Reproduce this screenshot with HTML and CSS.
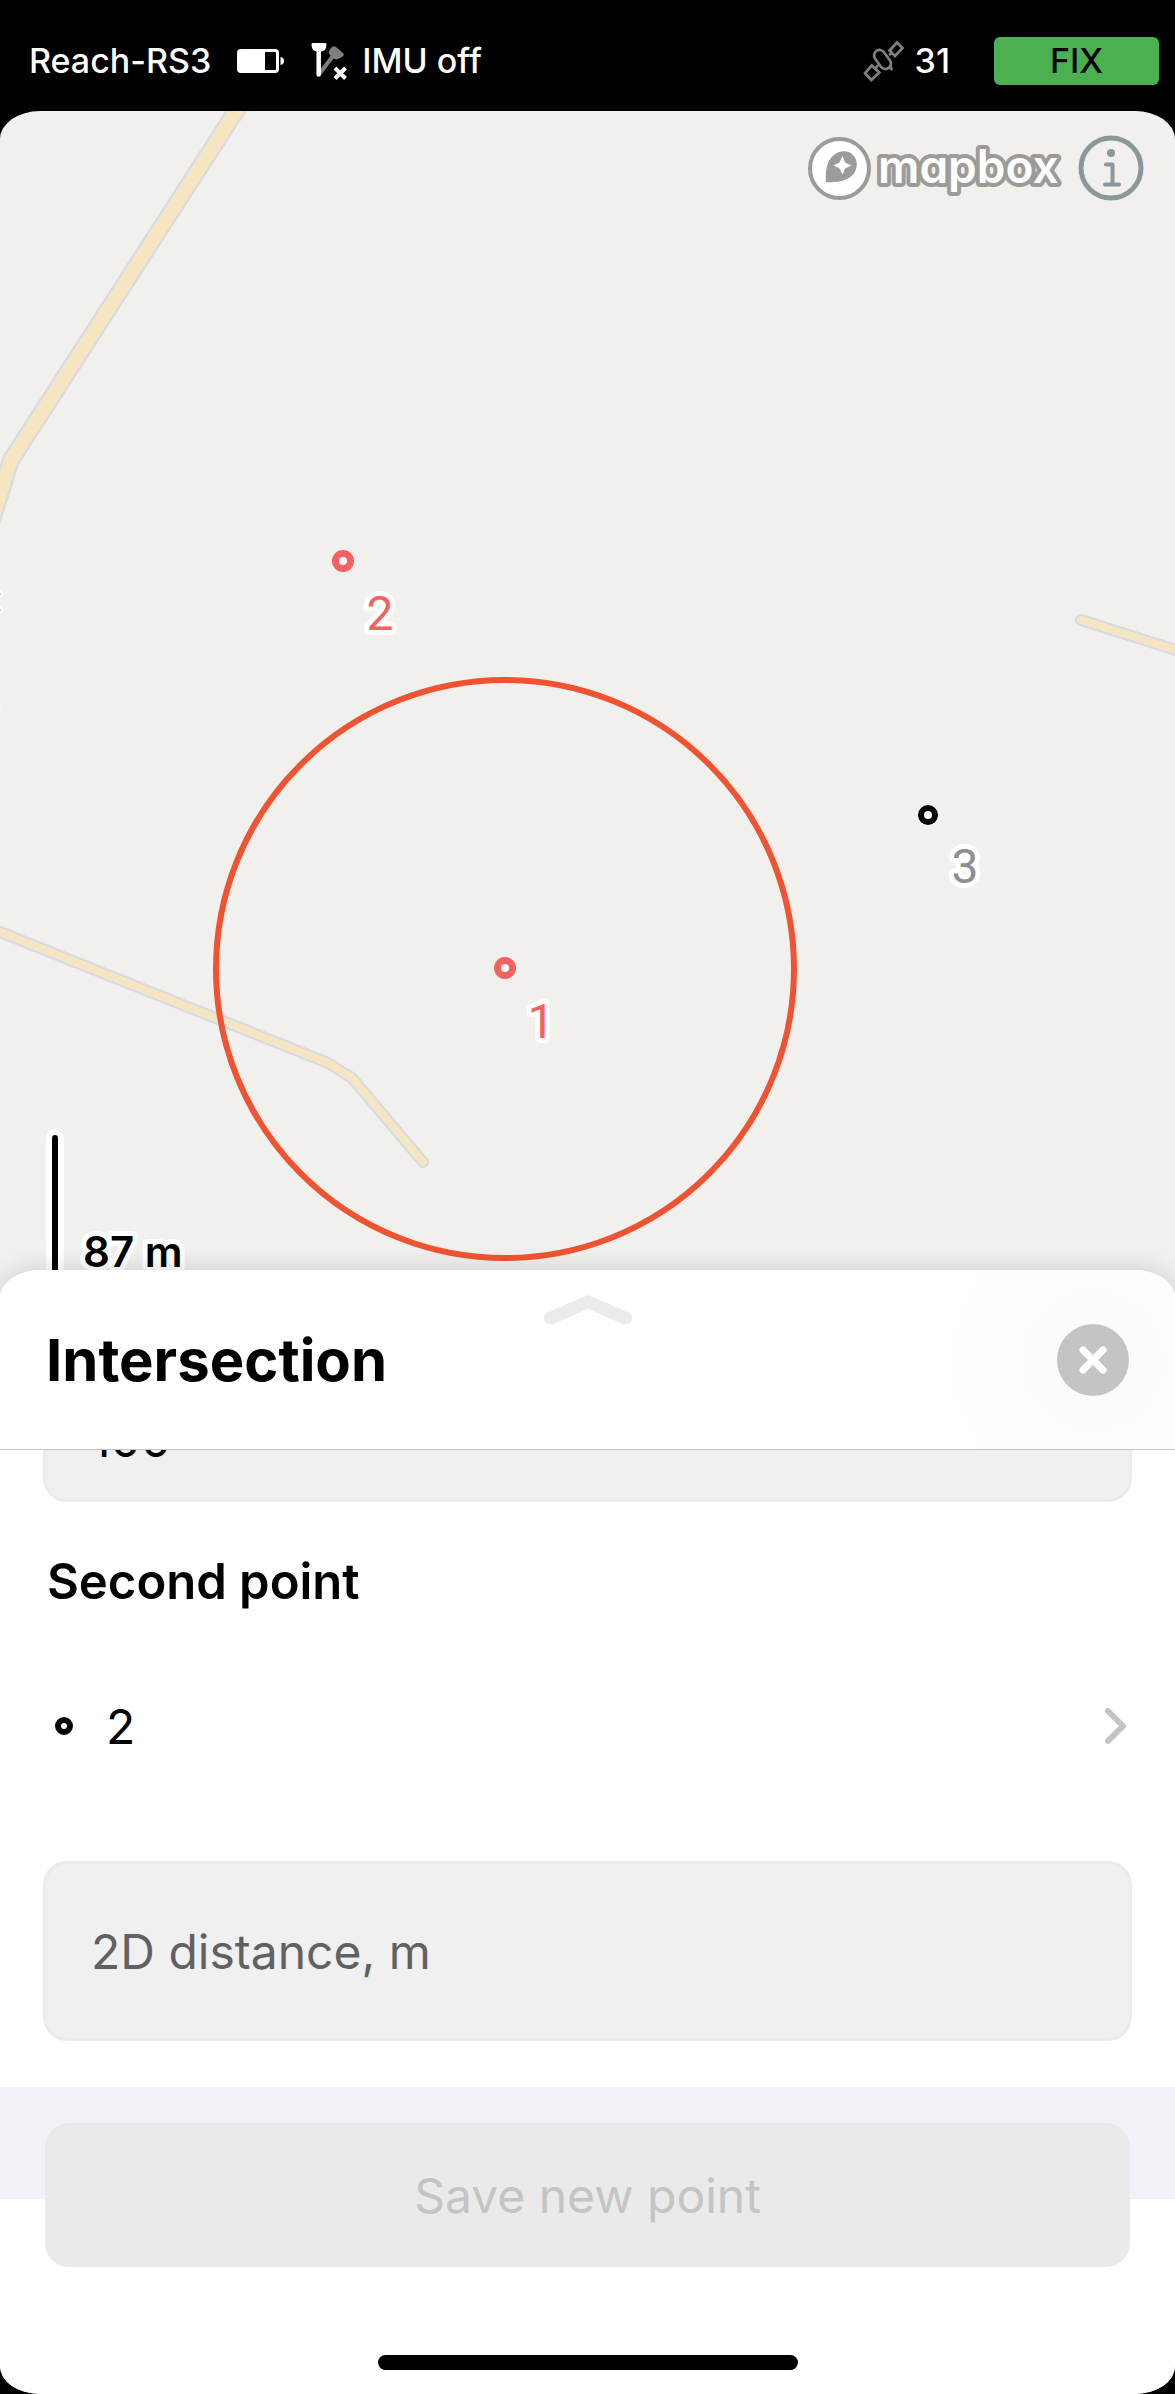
FILE: index.html
```html
<!DOCTYPE html>
<html lang="en">
<head>
<meta charset="utf-8">
<meta name="viewport" content="width=device-width, initial-scale=1">
<title>Intersection</title>
<link rel="stylesheet" href="styles.css">
</head>
<body>
<div class="screen">
  <header class="status">
    <span>Reach-RS3</span>
    <svg class="status-battery" width="47" height="24" viewBox="0 0 47 24" aria-hidden="true">
      <path fill="#fff" fill-rule="evenodd" d="M4 0H38a4 4 0 0 1 4 4V20a4 4 0 0 1-4 4H4a4 4 0 0 1-4-4V4a4 4 0 0 1 4-4ZM28 3V21H38a1 1 0 0 0 1-1V4a1 1 0 0 0-1-1Z"/>
      <path fill="#fff" d="M43.500 8Q47 8.500 47 12T43.500 16Z"/>
    </svg>
    <svg class="status-imu" width="38" height="38" viewBox="0 0 38 38" aria-hidden="true">
      <path stroke="#808080" stroke-width="4" stroke-linecap="round" d="M23 14L10 31"/>
      <path fill="#808080" d="M21 6Q23 3 26 5L33 11Q35 13 32 15L28 17Q25 18 23 16L20 13Q18 11 19 9Z"/>
      <path stroke="#fff" stroke-width="4.500" stroke-linecap="round" d="M8.700 7V32.500"/>
      <path fill="#fff" d="M3 1H15Q17 1 16.500 3Q16 9.500 11 9.500H7Q2 9.500 1.500 3Q1 1 3 1Z"/>
      <path stroke="#fff" stroke-width="4" d="M25 26L35.500 36.500M35.500 26L25 36.500"/>
    </svg>
    <span class="status-imu-label">IMU off</span>
    <svg class="status-satellite" width="42" height="42" viewBox="0 0 42 42" fill="none" stroke="#808080" stroke-width="2.700" aria-hidden="true">
      <path d="M34 2.500L39.500 8L32 16L26.500 10.500ZM8.700 25.500L16.300 32.500L8.300 40L2 33.300ZM26 15L29 13M13 28L15 25"/>
      <rect x="9" y="14" width="21" height="11" rx="5.500" transform="rotate(54 19.500 19.500)"/>
      <path fill="#808080" stroke="none" d="M23 28L28 24L30 29L28.500 31L26.500 29Z"/>
    </svg>
    <span>31</span>
    <button class="status-fix" type="button">FIX</button>
  </header>

  <main class="map">
    <svg class="map-canvas" viewBox="0 111 1175 1200" preserveAspectRatio="xMinYMin slice" role="img" aria-label="Map">
      <rect y="111" width="1175" height="1200" fill="#f1f0ec"/>
      <g fill="none" stroke-linecap="round" stroke-linejoin="round">
        <path stroke="#d6d9e6" stroke-width="18" d="M249 91L11 460L-16 545"/>
        <path stroke="#f5e5c1" stroke-width="14" d="M249 91L11 460L-16 545"/>
        <path stroke="#d6d9e6" stroke-width="12" d="M-20 924L328 1063L352 1078L423 1162M1081 620L1195 656"/>
        <path stroke="#f5e5c1" stroke-width="8" d="M-20 924L328 1063L352 1078L423 1162M1081 620L1195 656"/>
      </g>
      <g fill="#909090" stroke="#fff" stroke-width="3">
        <circle cx="-1" cy="594" r="3"/><circle cx="-1" cy="610" r="3"/><circle cx="-3" cy="710" r="2"/>
      </g>
      <circle cx="505" cy="969" r="289" fill="none" stroke="#f05331" stroke-width="6"/>
      <g fill="#fff" stroke="#f46161" stroke-width="7">
        <circle cx="343" cy="561" r="7.500"/>
        <circle cx="505" cy="968" r="7.500"/>
        <circle cx="928" cy="815" r="7" stroke="#000" stroke-width="6"/>
      </g>
      <g class="map-label">
        <text x="380" y="630">2</text>
        <text x="541" y="1038">1</text>
        <text class="map-label-muted" x="965" y="883">3</text>
      </g>
      <path stroke="#fff" stroke-width="18" stroke-linecap="round" d="M55 1138V1320"/>
      <path stroke="#000" stroke-width="6" stroke-linecap="round" d="M55 1138V1320"/>
      <text class="map-scale" x="83" y="1267">87 m</text>
    </svg>
    <div class="map-controls">
      <a class="map-logo" href="#mapbox" aria-label="Mapbox">
        <svg width="256" height="64" viewBox="808 137 256 64" aria-hidden="true">
          <circle cx="839.500" cy="169.500" r="29.500" fill="#fff" stroke="#9c9b99" stroke-width="4"/>
          <path fill="#9c9b99" d="M826 183C825 169 828 160 834.500 155.500C841 151 849 151.500 853 156C858 161 858 169 853.500 175C848 181.500 838 184 826 183Z"/>
          <path fill="#fff" d="M842.500 157L845 163.500L851.500 166.500L845 169.500L842.500 175.500L839.500 169.500L833.500 166.500L839.500 163.500Z"/>
          <text class="map-logo-word" x="878" y="184">mapbox</text>
        </svg>
      </a>
      <button class="map-info" type="button" aria-label="Map information">
        <svg width="66" height="66" viewBox="0 0 66 66" fill="none" stroke="#8b989b" stroke-linecap="round" stroke-linejoin="round" aria-hidden="true">
          <circle cx="33" cy="33" r="30" stroke-width="5"/>
          <path stroke-width="4" d="M28 29.500H34.500V49M27 49.500H41"/>
          <circle cx="33" cy="18" r="4" fill="#8b989b" stroke="none"/>
        </svg>
      </button>
    </div>
  </main>

  <section class="sheet" aria-labelledby="sheet-title">
    <div class="sheet-head">
      <svg class="sheet-grip" width="90" height="32" viewBox="0 0 90 32" fill="none" stroke="#ebebeb" stroke-width="13" stroke-linecap="round" aria-hidden="true">
        <path d="M7.500 24L45 8L82.500 24"/>
      </svg>
      <h1 id="sheet-title">Intersection</h1>
      <button class="sheet-close" type="button" aria-label="Close">
        <svg width="72" height="72" viewBox="0 0 72 72" stroke="#fff" stroke-width="7" stroke-linecap="round" aria-hidden="true">
          <path d="M26 26L46 46M46 26L26 46"/>
        </svg>
      </button>
    </div>
    <div class="sheet-body">
      <input class="field field-filled" type="text" inputmode="decimal" value="100" aria-label="2D distance, m">
      <h2>Second point</h2>
      <button class="point-row" type="button">
        <svg width="20" height="20" viewBox="0 0 20 20" aria-hidden="true">
          <circle cx="10" cy="10" r="6" fill="#fff" stroke="#000" stroke-width="6"/>
        </svg>
        <span>2</span>
        <svg class="point-row-arrow" width="24" height="38" viewBox="0 0 24 38" fill="none" stroke="#c4c4c4" stroke-width="6" stroke-linecap="round" stroke-linejoin="round" aria-hidden="true">
          <path d="M4 4L19 19L4 34"/>
        </svg>
      </button>
      <input class="field" type="text" inputmode="decimal" placeholder="2D distance, m" aria-label="2D distance, m">
    </div>
    <div class="sheet-foot">
      <button class="save" type="button" disabled>Save new point</button>
      <div class="home-bar"></div>
    </div>
  </section>
</div>
</body>
</html>
```
FILE: styles.css
```css
* {
  box-sizing: border-box;
}

body {
  margin: 0;
  background: #000;
  color: #000;
  font-family: Inter, "Liberation Sans", sans-serif;
  font-size: 48px;
}

button,
input {
  font: inherit;
  color: inherit;
  border: 0;
  margin: 0;
  padding: 0;
  background: none;
}

h1,
h2 {
  margin: 0;
}

svg {
  display: block;
  flex: none;
}

.screen {
  display: flex;
  flex-direction: column;
  min-height: 100vh;
  overflow: hidden;
  border-radius: 0 0 40px 40px / 0 0 28px 28px;
}

/* Status bar */

.status {
  display: flex;
  align-items: center;
  height: 111px;
  padding: 10px 16px 0 29px;
  color: #fff;
  font-size: 34px;
  font-weight: 500;
}

.status-battery {
  margin-left: 26px;
}

.status-imu {
  margin-left: 26px;
}

.status-imu-label {
  margin-left: 14px;
}

.status-satellite {
  margin: 0 10px 0 auto;
}

.status-fix {
  width: 165px;
  height: 48px;
  margin-left: 44px;
  border-radius: 6px;
  background: #4caf50;
  color: #000;
}

/* Map */

.map {
  position: relative;
  flex: 1;
  min-height: 600px;
  overflow: hidden;
  border-radius: 40px 40px 0 0 / 28px 28px 0 0;
}

.map-canvas {
  position: absolute;
  inset: 0;
  width: 100%;
  height: 100%;
}

.map-label {
  font-family: Roboto, sans-serif;
  font-size: 48px;
  fill: #f46161;
  stroke: #fff;
  stroke-width: 10px;
  stroke-linejoin: round;
  paint-order: stroke;
  text-anchor: middle;
}

.map-label-muted {
  fill: #8e8e93;
}

.map-scale {
  font-size: 42px;
  font-weight: 600;
  stroke: #fff;
  stroke-width: 10px;
  stroke-linejoin: round;
  paint-order: stroke;
}

.map-controls {
  position: relative;
  display: flex;
  justify-content: flex-end;
  align-items: center;
  gap: 14px;
  padding: 24px 31px;
}

.map-logo-word {
  font-size: 46px;
  font-weight: 600;
  font-feature-settings: "cv11";
  fill: #fff;
  stroke: #9c9b99;
  stroke-width: 8px;
  stroke-linejoin: round;
  paint-order: stroke;
}

/* Bottom sheet */

.sheet {
  position: relative;
  margin-top: -40px;
  border-radius: 40px 40px 0 0 / 28px 28px 0 0;
  background: #fff;
  box-shadow: 0 0 24px rgba(0, 0, 0, 0.16);
}

.sheet-head {
  position: relative;
  z-index: 1;
  display: flex;
  justify-content: space-between;
  align-items: center;
  height: 180px;
  padding: 0 46px;
  border-bottom: 1px solid #c4c4c4;
  border-radius: 40px 40px 0 0 / 28px 28px 0 0;
  background: radial-gradient(circle at calc(100% - 82px) 90px, #fbfbfb 36px, #fff 148px);
}

.sheet-head h1 {
  font-size: 58px;
  font-weight: 700;
}

.sheet-grip {
  position: absolute;
  top: 24px;
  left: 50%;
  transform: translateX(-50%);
}

.sheet-close {
  border-radius: 50%;
  background: #c4c4c4;
}

.sheet-body {
  overflow: hidden;
  padding: 0 43px 46px;
}

.sheet-body h2 {
  padding: 48px 4px 0;
  font-size: 49px;
  font-weight: 600;
  line-height: 64px;
}

.field {
  display: block;
  width: 100%;
  height: 180px;
  padding: 0 45px;
  border: 3px solid #ebebeb;
  border-radius: 24px;
  background: #f0f0f0;
}

.field::placeholder {
  color: #616161;
  opacity: 1;
}

/* The list is scrolled, so the first field slides under the header. */
.field-filled {
  margin-top: -128px;
  padding-top: 54px;
}

.point-row {
  display: flex;
  align-items: center;
  gap: 32px;
  width: 100%;
  height: 180px;
  margin: 22px 0 45px;
  padding: 0 4px 0 11px;
}

.point-row-arrow {
  margin-left: auto;
}

.sheet-foot {
  padding: 36px 45px 24px;
  background: linear-gradient(#f2f1f7 112px, #fff 112px);
}

.save {
  display: block;
  width: 100%;
  height: 144px;
  border-radius: 24px;
  background: #eaeaea;
  color: #c4c4c4;
}

.home-bar {
  width: 420px;
  max-width: 60%;
  height: 15px;
  margin: 88px auto 0;
  border-radius: 8px;
  background: #000;
}
```
